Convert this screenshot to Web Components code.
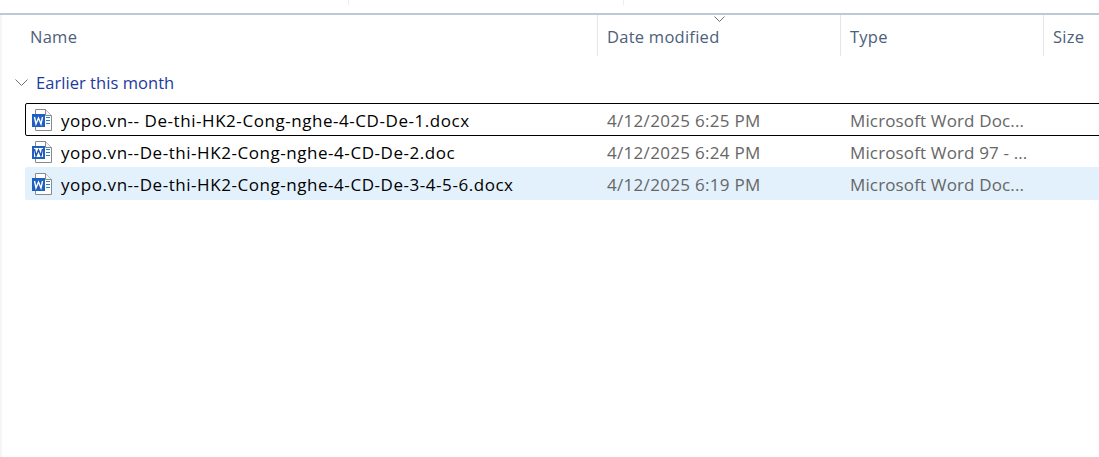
<!DOCTYPE html>
<html>
<head>
<meta charset="utf-8">
<style>
  html, body { margin: 0; height: 100%; background: #fff; overflow: hidden; }
  body { font-family: "Open Sans", "Noto Sans", sans-serif; }
</style>
</head>
<body>
<explorer-window>
  <column-header>
    <header-cell width="598">Name</header-cell>
    <header-cell width="243" sorted>Date modified</header-cell>
    <header-cell width="203">Type</header-cell>
    <header-cell width="55">Size</header-cell>
  </column-header>
  <group-title>Earlier this month</group-title>
  <file-row focused name="yopo.vn-- De-thi-HK2-Cong-nghe-4-CD-De-1.docx" date="4/12/2025 6:25 PM" type="Microsoft Word Doc..."></file-row>
  <file-row legacy name="yopo.vn--De-thi-HK2-Cong-nghe-4-CD-De-2.doc" date="4/12/2025 6:24 PM" type="Microsoft Word 97 - ..."></file-row>
  <file-row selected name="yopo.vn--De-thi-HK2-Cong-nghe-4-CD-De-3-4-5-6.docx" date="4/12/2025 6:19 PM" type="Microsoft Word Doc..."></file-row>
</explorer-window>
<script>
class ExplorerWindow extends HTMLElement {
  constructor() {
    super();
    this.attachShadow({ mode: 'open' });
    this.shadowRoot.innerHTML = `
      <style>
        :host { display: block; height: 457px; box-sizing: border-box; overflow: hidden; }
        .toolbar { height: 13px; display: flex; }
        .toolbar i { width: 1px; height: 5px; background: #eee; }
        .toolbar i:nth-child(1) { margin-left: 348px; }
        .toolbar i:nth-child(2) { margin-left: 274px; }
        .line { height: 2px; background: #bccad8; }
        .pane { border-left: 2px solid #f5f5f5; height: 442px; box-sizing: border-box; }
      </style>
      <div class="toolbar"><i></i><i></i></div>
      <div class="line"></div>
      <div class="pane"><slot></slot></div>
    `;
  }
}

class ColumnHeader extends HTMLElement {
  constructor() {
    super();
    this.attachShadow({ mode: 'open' });
    this.shadowRoot.innerHTML = `
      <style>
        :host { display: flex; height: 41px; margin-left: -2px; }
      </style>
      <slot></slot>
    `;
  }
}

class HeaderCell extends HTMLElement {
  constructor() {
    super();
    this.attachShadow({ mode: 'open' });
    this.shadowRoot.innerHTML = `
      <style>
        :host {
          display: block; position: relative; box-sizing: border-box; flex: none;
          padding: 11px 0 0 9px; border-right: 1px solid #e5e5e5;
          font-size: 16.5px; line-height: 22px; letter-spacing: .26px; color: #4c607a; white-space: nowrap;
        }
        :host(:first-child) { padding-left: 30px; }
        :host(:last-child) { border-right: 0; }
        svg { position: absolute; left: 116px; top: 1px; }
      </style>
      <slot></slot>
    `;
  }

  connectedCallback() {
    this.style.width = this.getAttribute('width') + 'px';
    if (this.hasAttribute('sorted')) {
      const tpl = document.createElement('template');
      tpl.innerHTML = `<svg width="11" height="6" viewBox="0 0 11 6"><path d="M.5.5l5 5 5-5" fill="none" stroke="#6d6d6d"/></svg>`;
      this.shadowRoot.append(tpl.content);
    }
  }
}

class GroupTitle extends HTMLElement {
  constructor() {
    super();
    this.attachShadow({ mode: 'open' });
    this.shadowRoot.innerHTML = `
      <style>
        :host {
          display: flex; align-items: center; height: 24px; margin: 14px 0 9px 0;
          padding: 0 0 0 13px; box-sizing: border-box;
          font-size: 16.5px; letter-spacing: .05px; color: #1e3a9e;
        }
        svg { margin: 1px 8px 0 0; }
      </style>
      <svg width="13" height="8" viewBox="0 0 13 8"><path d="M.5.5l6 6 6-6" fill="none" stroke="#707070"/></svg>
      <slot></slot>
    `;
  }
}

class FileRow extends HTMLElement {
  constructor() {
    super();
    this.attachShadow({ mode: 'open' });
    const legacy = this.hasAttribute('legacy');
    this.shadowRoot.innerHTML = `
      <style>
        :host {
          display: flex; align-items: center; height: 33px; box-sizing: border-box;
          margin: -1px -10px 0 23px; border: 1px solid transparent; font-size: 17px; white-space: nowrap;
        }
        :host([focused]) { border-color: #000; border-radius: 2px; margin-top: 0; }
        :host([selected]) { background: #e3f1fc; border-radius: 2px 0 0 2px; }
        svg { margin: 0 8px 0 5px; flex: none; }
        span { flex: none; padding-top: 2px; }
        .name { width: 546px; color: #000; letter-spacing: .55px; }
        .date { width: 243px; color: #666; letter-spacing: .3px; }
        .type { color: #666; letter-spacing: .14px; }
      </style>
      <svg width="22" height="22" viewBox="0 0 22 22">
        <path d="M4.500 .5h10l6 6v15h-16z" fill="#fff" stroke="#8a8a8a"/>
        <path d="M14.500 .5v6h6" fill="#f4f4f4" stroke="#8a8a8a"/>
        <path d="M15 8.500h4M15 11.500h4M15 14.500h4" stroke="#2b7cd3"/>
        <rect x="${legacy ? 2 : 1.5}" y="${legacy ? 6 : 5.5}" width="${legacy ? 11 : 12}" height="${legacy ? 11 : 12}" fill="${legacy ? '#fff' : '#1f5fbf'}" stroke="#1f5fbf" stroke-width="${legacy ? 2 : 1}"/>
        <path d="M3.500 8l1.500 7 2.500-6 2.500 6 1.500-7" fill="none" stroke="${legacy ? '#1f4fa8' : '#fff'}" stroke-width="1.400"/>
      </svg>
      <span class="name"></span><span class="date"></span><span class="type"></span>
    `;
  }

  connectedCallback() {
    this.shadowRoot.querySelector('.name').textContent = this.getAttribute('name');
    this.shadowRoot.querySelector('.date').textContent = this.getAttribute('date');
    this.shadowRoot.querySelector('.type').textContent = this.getAttribute('type');
  }
}

customElements.define('explorer-window', ExplorerWindow);
customElements.define('column-header', ColumnHeader);
customElements.define('header-cell', HeaderCell);
customElements.define('group-title', GroupTitle);
customElements.define('file-row', FileRow);
</script>
</body>
</html>
